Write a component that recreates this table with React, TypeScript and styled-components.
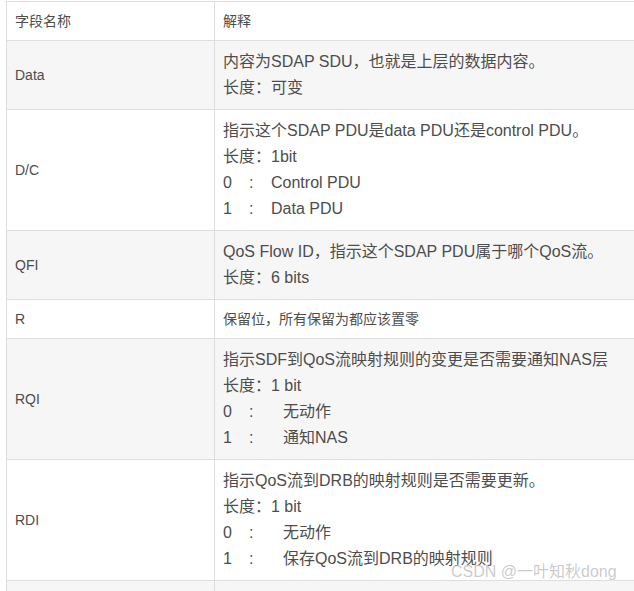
import React from "react";
import styled, { createGlobalStyle } from "styled-components";

const GlobalStyle = createGlobalStyle`
  html, body {
    margin: 0;
    padding: 0;
    background: #fff;
    overflow: hidden;
  }
  body {
    font-family: "Liberation Sans", "Noto Sans CJK SC", sans-serif;
    color: #4d4d4d;
  }
`;

type Entry = { code: string; text: string };

type Row = {
  name: string;
  lines?: string[];
  entries?: Entry[];
  small?: string;
  gap?: number;
};

const rows: Row[] = [
  { name: "Data", lines: ["内容为SDAP SDU，也就是上层的数据内容。", "长度：可变"] },
  {
    name: "D/C",
    lines: ["指示这个SDAP PDU是data PDU还是control PDU。", "长度：1bit"],
    entries: [
      { code: "0", text: "Control PDU" },
      { code: "1", text: "Data PDU" },
    ],
    gap: 22,
  },
  { name: "QFI", lines: ["QoS Flow ID，指示这个SDAP PDU属于哪个QoS流。", "长度：6 bits"] },
  { name: "R", small: "保留位，所有保留为都应该置零" },
  {
    name: "RQI",
    lines: ["指示SDF到QoS流映射规则的变更是否需要通知NAS层", "长度：1 bit"],
    entries: [
      { code: "0", text: "无动作" },
      { code: "1", text: "通知NAS" },
    ],
    gap: 34,
  },
  {
    name: "RDI",
    lines: ["指示QoS流到DRB的映射规则是否需要更新。", "长度：1 bit"],
    entries: [
      { code: "0", text: "无动作" },
      { code: "1", text: "保存QoS流到DRB的映射规则" },
    ],
    gap: 34,
  },
  { name: "", lines: [""] },
];

export default function App() {
  return (
    <Page>
      <GlobalStyle />
      <Table>
        <colgroup>
          <col style={{ width: 208 }} />
          <col />
        </colgroup>
        <tbody>
          <tr>
            <HeadCell>字段名称</HeadCell>
            <HeadCell>解释</HeadCell>
          </tr>
          {rows.map((row, i) => (
            <BodyRow key={i} $striped={i % 2 === 0}>
              <NameCell>{row.name}</NameCell>
              <DescCell>
                {row.small && <SmallText>{row.small}</SmallText>}
                {row.lines?.map((l, j) => (
                  <Line key={j}>{l}</Line>
                ))}
                {row.entries?.map((e) => (
                  <Line key={e.code}>
                    <Code>{e.code}</Code>
                    <Colon $gap={row.gap ?? 22}>:</Colon>
                    {e.text}
                  </Line>
                ))}
              </DescCell>
            </BodyRow>
          ))}
        </tbody>
      </Table>
      <Watermark>CSDN @一叶知秋dong</Watermark>
    </Page>
  );
}

const Page = styled.div`
  position: relative;
  width: 634px;
  height: 591px;
  overflow: hidden;
  padding: 1px 0 0 6px;
  box-sizing: border-box;
`;

const Table = styled.table`
  width: 700px;
  border-collapse: collapse;
  table-layout: fixed;
  border-top: 1px solid #ddd;
`;

const HeadCell = styled.th`
  text-align: left;
  font-weight: normal;
  font-size: 14px;
  line-height: 22px;
  padding: 8px 8px;
  border: 1px solid #ddd;
  border-top: none;
  color: #4d4d4d;
`;

const BodyRow = styled.tr<{ $striped: boolean }>`
  background: ${(p) => (p.$striped ? "#f6f6f6" : "#fff")};
`;

const NameCell = styled.td`
  font-size: 14px;
  line-height: 22px;
  padding: 8px 8px;
  border: 1px solid #ddd;
  vertical-align: middle;
`;

const DescCell = styled.td`
  font-size: 16px;
  line-height: 26px;
  padding: 8px 8px;
  border: 1px solid #ddd;
  vertical-align: top;
  white-space: nowrap;
`;

const Line = styled.div`
  height: 26px;
`;

const SmallText = styled.div`
  font-size: 14px;
  line-height: 22px;
`;

const Code = styled.span`
  display: inline-block;
  width: 26px;
`;

const Colon = styled.span<{ $gap: number }>`
  display: inline-block;
  width: ${(p) => p.$gap}px;
`;

const Watermark = styled.div`
  position: absolute;
  left: 451px;
  top: 561px;
  font-size: 16px;
  line-height: 22px;
  color: rgba(150, 150, 150, 0.5);
  text-shadow: 0 0 2px #fff;
  white-space: nowrap;
`;
